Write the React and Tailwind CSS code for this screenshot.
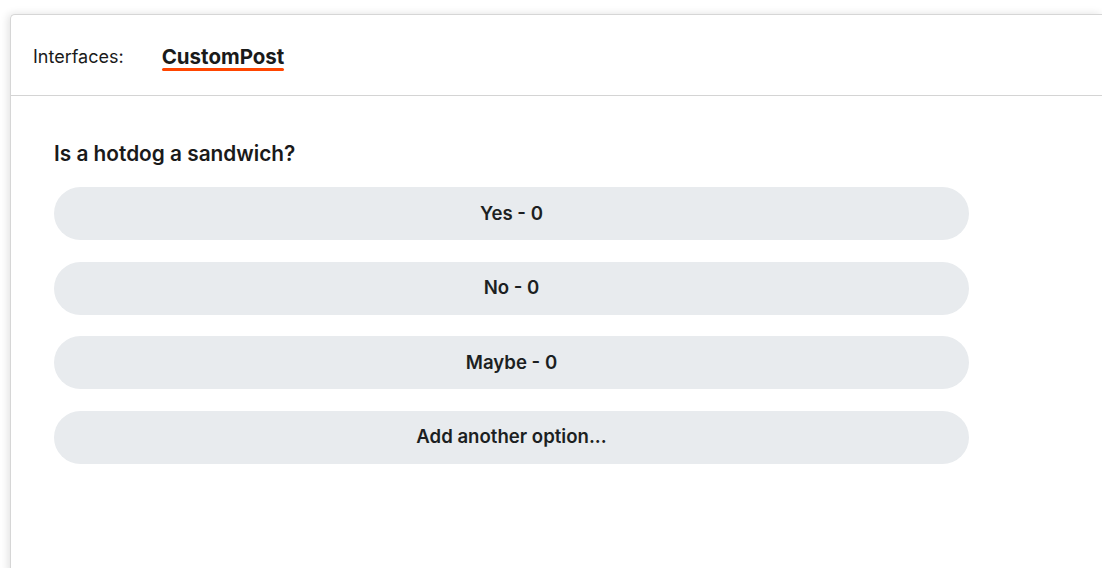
export default function App() {
  const options = ['Yes - 0', 'No - 0', 'Maybe - 0'];

  return (
    <div className="min-h-[568px] bg-white pl-[10px] pt-[14px] overflow-hidden" style={{ fontFamily: 'Inter, "Noto Sans", sans-serif' }}>
      <div className="h-[560px] bg-white border-t border-l border-[#d6d6d6] rounded-tl-[5px] shadow-[-2px_0_8px_rgba(0,0,0,0.12)]">
        {/* tabs */}
        <div className="h-[81px] flex items-center border-b border-[#d4d4d4] pl-[22px] pt-[3px]">
          <span className="text-[18px] text-[#1a1a1a]">Interfaces:</span>
          <span className="ml-[38px] relative text-[20.5px] font-bold text-[#1a1a1a] leading-[26px]">
            CustomPost
            <span className="absolute left-0 right-0 -bottom-[1px] h-[3px] rounded-full bg-[#ff4500]" />
          </span>
        </div>

        {/* poll */}
        <div className="pl-[43px] pt-[45px] w-[958px]">
          <h2 className="text-[20.8px] font-semibold text-[#1a1a1a] leading-[26px]">Is a hotdog a sandwich?</h2>
          <div className="mt-[20px] flex flex-col gap-[21.6px]">
            {options.map((opt) => (
              <button key={opt} className="h-[53px] w-full rounded-full bg-[#e8ebee] text-[18.6px] font-semibold text-[#1c1f22]">
                {opt}
              </button>
            ))}
            <button className="h-[53px] w-full rounded-full bg-[#e8ebee] text-[18.6px] font-semibold text-[#1c1f22]">
              Add another option...
            </button>
          </div>
        </div>
      </div>
    </div>
  );
}
